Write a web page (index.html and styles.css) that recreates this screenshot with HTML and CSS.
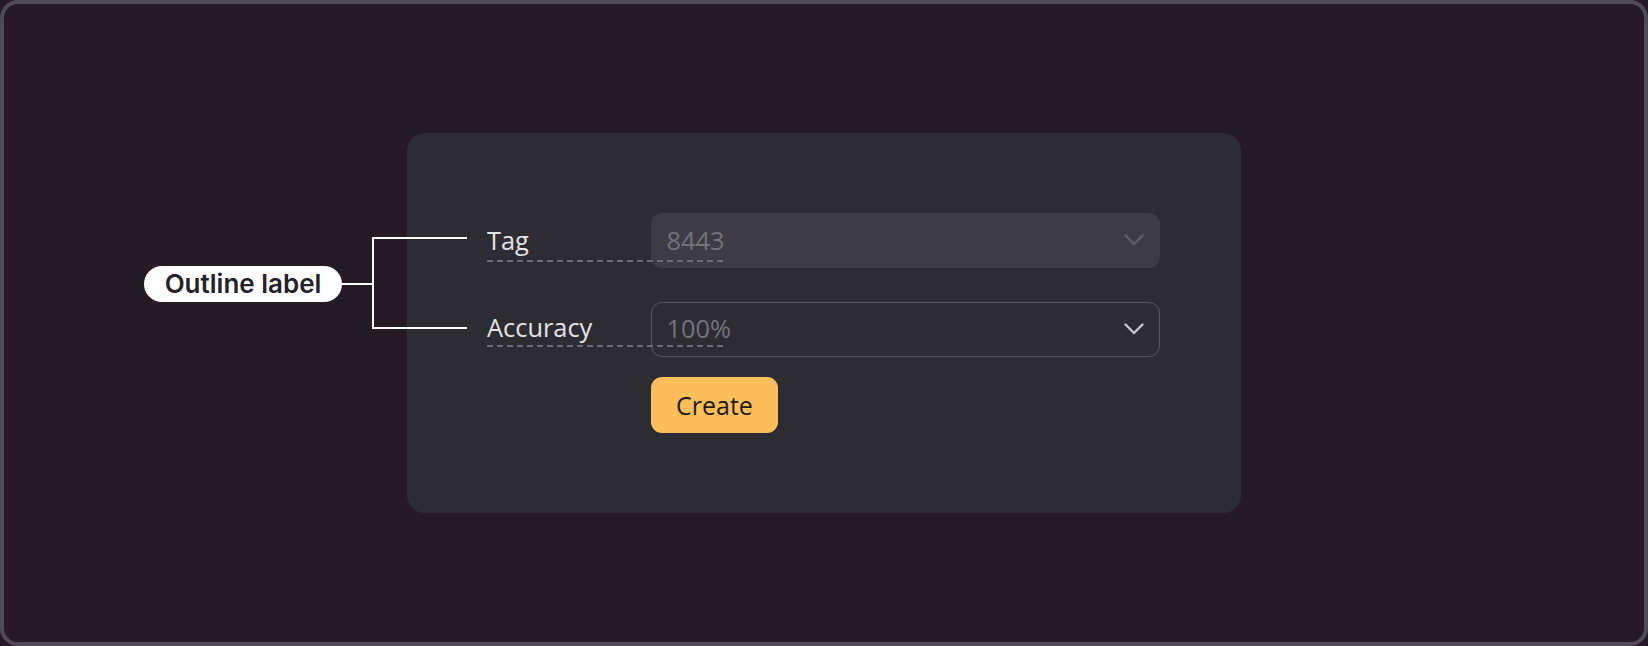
FILE: index.html
```html
<!DOCTYPE html>
<html lang="en">
<head>
<meta charset="utf-8">
<title>Outline label</title>
<link rel="stylesheet" href="styles.css">
</head>
<body>
<div class="screen">
  <div class="card">
    <div class="form">
      <div class="label-cell"><span class="label">Tag</span></div>
      <div class="select select-filled">
        <span class="value">8443</span>
        <svg class="chevron chevron-dim" width="20" height="12" viewBox="0 0 20 12"><polyline points="1.5,1.5 10,10 18.5,1.5" fill="none" stroke="currentColor" stroke-width="2.4" stroke-linecap="round" stroke-linejoin="round"/></svg>
      </div>
      <div class="label-cell label-cell-raised"><span class="label label-tight">Accuracy</span></div>
      <div class="select select-outlined">
        <span class="value value-raised">100%</span>
        <svg class="chevron" width="20" height="12" viewBox="0 0 20 12"><polyline points="1.5,1.5 10,10 18.5,1.5" fill="none" stroke="currentColor" stroke-width="2.4" stroke-linecap="round" stroke-linejoin="round"/></svg>
      </div>
      <div></div>
      <div class="actions"><button class="btn-create">Create</button></div>
    </div>
  </div>

  <div class="pill">Outline label</div>
  <svg class="connector" width="130" height="100" viewBox="0 0 130 100">
    <line x1="0" y1="51" x2="35" y2="51" stroke="#ffffff" stroke-width="2"/>
    <line x1="35" y1="4" x2="35" y2="96" stroke="#ffffff" stroke-width="2"/>
    <line x1="34" y1="5" x2="129" y2="5" stroke="#ffffff" stroke-width="2"/>
    <line x1="34" y1="95" x2="129" y2="95" stroke="#ffffff" stroke-width="2"/>
  </svg>
</div>
</body>
</html>
```

FILE: styles.css
```css
* { box-sizing: border-box; }
html, body { margin: 0; padding: 0; background: #261b25; }
body { width: 1648px; height: 646px; overflow: hidden; }

.screen {
  position: relative;
  width: 1648px;
  height: 646px;
  border: 4px solid #4f4a53;
  border-radius: 18px;
  background: #261b25;
  display: flex;
  align-items: center;
  justify-content: center;
  font-family: "Open Sans", "Noto Sans", sans-serif;
}

.card {
  width: 834px;
  height: 380px;
  background: #2d2c32;
  border-radius: 18px;
  padding: 80px 81px 80px 80px;
}

.form {
  display: grid;
  grid-template-columns: 164px 509px;
  grid-template-rows: 55px 55px 56px;
  row-gap: 34px;
}
.form > :nth-child(n+5) { margin-top: -14px; }

.label-cell {
  display: flex;
  align-items: center;
  padding-bottom: 2px;
}
.label-cell-raised { padding-bottom: 5px; }
.label {
  position: relative;
  font-size: 25.4px;
  line-height: 34px;
  color: #e4e3e7;
  white-space: nowrap;
}
.label::after {
  content: "";
  position: absolute;
  left: 0;
  top: 37px;
  width: 237px;
  height: 2px;
  background: repeating-linear-gradient(to right, #6d6c72 0 6px, transparent 6px 10px);
  z-index: 2;
}
.label-tight::after { top: 35px; }

.select {
  display: flex;
  align-items: center;
  justify-content: space-between;
  border-radius: 11px;
  border: 1.5px solid transparent;
  padding: 0 15px 2px 14.5px;
}
.select-filled { background: #3d3c42; }
.select-outlined { border-color: #58575d; padding-bottom: 4px; }
.value {
  font-size: 25.4px;
  line-height: 34px;
  color: #747379;
}
.chevron { color: #c8c7cb; display: block; }
.chevron-dim { color: #616066; }
.select-filled .chevron { margin-top: 1px; }
.select-outlined .chevron { margin-top: 3px; }

.actions { display: flex; }
.btn-create {
  height: 56px;
  padding: 0 25px;
  border: none;
  border-radius: 11px;
  background: #ffbe5c;
  color: #1e1b17;
  font-family: "Open Sans", "Noto Sans", sans-serif;
  font-size: 25px;
  line-height: 34px;
}

.pill {
  position: absolute;
  left: 140px;
  top: 262px;
  width: 198px;
  height: 36px;
  border-radius: 18px;
  background: #ffffff;
  color: #24212a;
  font-family: Inter, "Noto Sans", sans-serif;
  font-weight: 600;
  font-size: 26px;
  line-height: 36px;
  text-align: center;
}

.connector {
  position: absolute;
  left: 334px;
  top: 229px;
  display: block;
}
```
